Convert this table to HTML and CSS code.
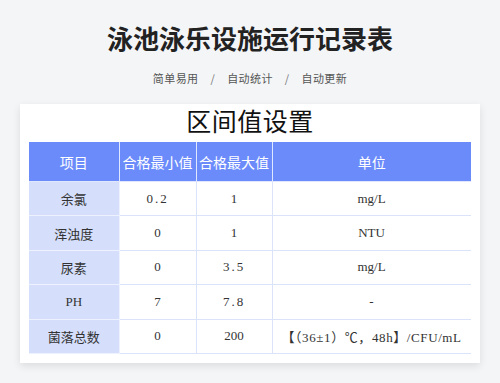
FILE: index.html
```html
<!DOCTYPE html>
<html lang="zh">
<head>
<meta charset="utf-8">
<link rel="stylesheet" href="styles.css">
</head>
<body>
<header class="hero">
  <h1 class="title">泳池泳乐设施运行记录表</h1>
  <p class="tags"><span>简单易用</span><span class="sep">/</span><span>自动统计</span><span class="sep">/</span><span>自动更新</span></p>
</header>
<section class="card">
  <h2 class="card-title">区间值设置</h2>
  <div class="table-wrap">
    <table class="grid">
      <colgroup><col class="c1"><col class="c2"><col class="c3"><col class="c4"></colgroup>
      <thead>
        <tr><th>项目</th><th>合格最小值</th><th>合格最大值</th><th>单位</th></tr>
      </thead>
      <tbody>
        <tr><td class="item">余氯</td><td class="num">0.2</td><td>1</td><td>mg/L</td></tr>
        <tr><td class="item">浑浊度</td><td>0</td><td>1</td><td>NTU</td></tr>
        <tr><td class="item">尿素</td><td>0</td><td class="num">3.5</td><td>mg/L</td></tr>
        <tr><td class="item">PH</td><td>7</td><td class="num">7.8</td><td>-</td></tr>
        <tr><td class="item">菌落总数</td><td>0</td><td>200</td><td class="wide">【（36±1）℃，48h】/CFU/mL</td></tr>
        <tr><td class="item"></td><td></td><td></td><td></td></tr>
      </tbody>
    </table>
  </div>
</section>
</body>
</html>
```
FILE: styles.css
```css
html, body { margin: 0; padding: 0; }
body {
  background: #f4f5f7;
  font-family: "Noto Sans CJK SC", "Noto Sans", sans-serif;
  width: 500px;
  height: 383px;
  overflow: hidden;
}
.hero { text-align: center; padding-top: 19px; }
.title {
  margin: 0;
  font-size: 26px;
  line-height: 38px;
  font-weight: 700;
  color: #222;
}
.tags {
  margin: 13px 0 0;
  font-size: 11px;
  line-height: 16px;
  color: #555;
  letter-spacing: 0.4px;
}
.tags .sep { margin: 0 12px; color: #777; }
.card {
  margin: 18px 20px 0;
  background: #fff;
  padding: 0 9px 9px;
  box-shadow: 0 3px 8px rgba(0,0,0,0.10);
}
.card-title {
  margin: 0;
  height: 38px;
  line-height: 38px;
  text-align: center;
  font-family: "Liberation Serif", "Noto Sans CJK SC", serif;
  font-weight: 400;
  font-size: 25px;
  color: #111;
  letter-spacing: 0.5px;
}
.table-wrap { height: 212px; overflow: hidden; }
.grid {
  width: 442px;
  border-collapse: collapse;
  table-layout: fixed;
  font-family: "Liberation Serif", "Noto Sans CJK SC", serif;
  color: #333;
}
.c1 { width: 90px; }
.c2 { width: 77px; }
.c3 { width: 76px; }
.c4 { width: 199px; }
.grid th {
  height: 39px;
  padding: 0;
  background: #6b8bfb;
  color: #fff;
  font-weight: 400;
  font-size: 14px;
  border: 1.5px solid #dfe7ff;
  border-top: none;
  white-space: nowrap;
}
.grid th:first-child { border-left: none; }
.grid th:last-child { border-right: none; }
.grid td {
  height: 33.4px;
  padding: 0;
  text-align: center;
  font-size: 13px;
  border: 1.5px solid #dbe3fb;
  white-space: nowrap;
}
.grid td.num { letter-spacing: 2px; }
.grid td.wide { letter-spacing: 0.6px; }
.grid td:first-child { border-left: none; }
.grid td.item { background: #d5dffb; border-color: #eef2fe; border-left: none; }
```
